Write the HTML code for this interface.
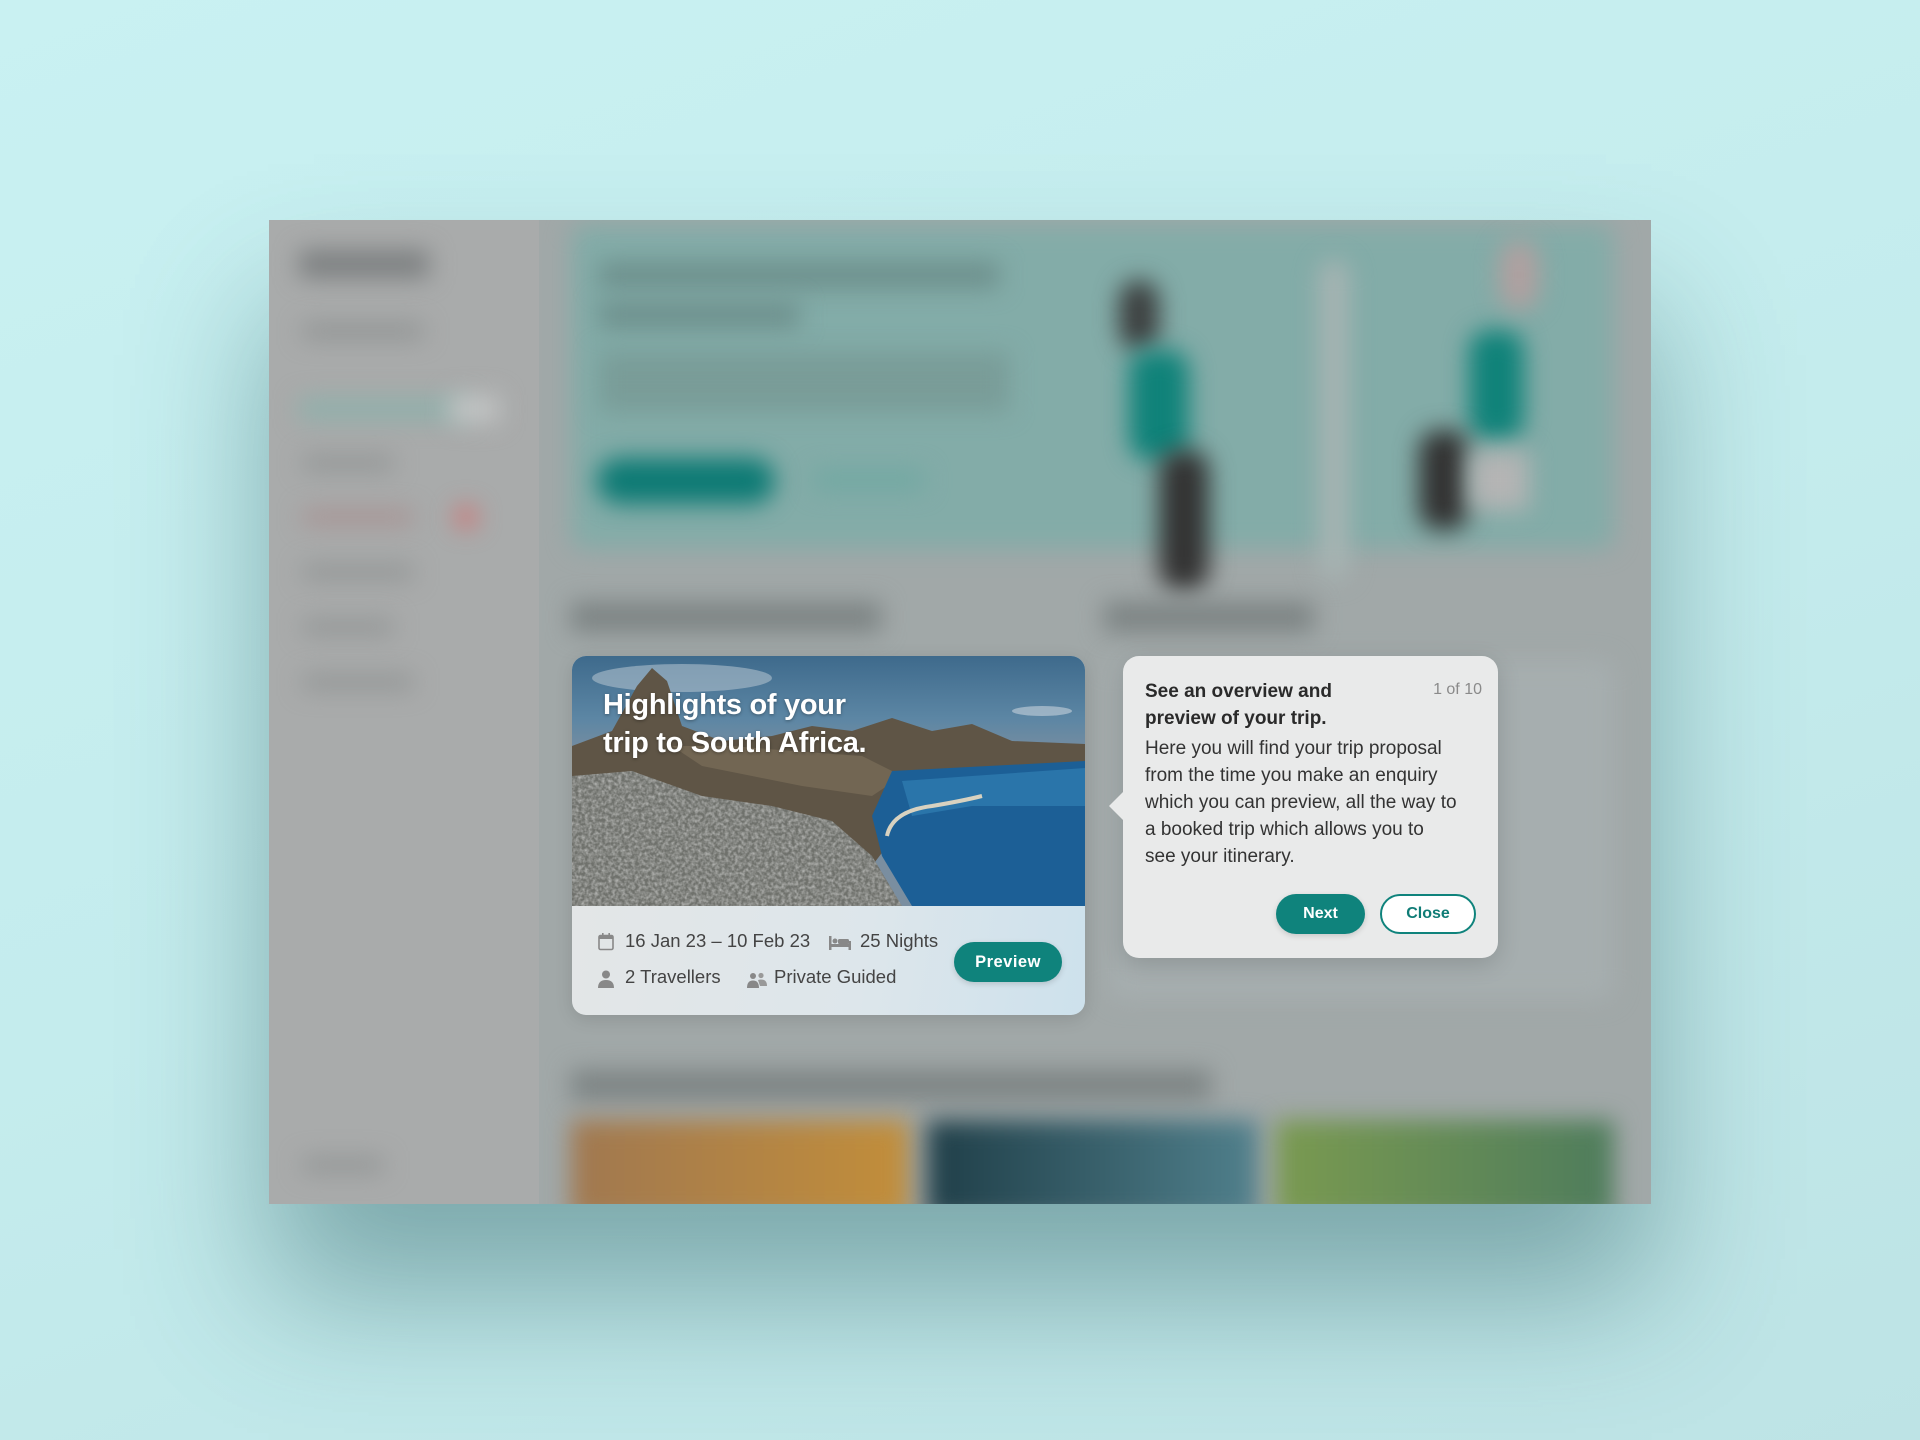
<!DOCTYPE html>
<html><head><meta charset="utf-8"><style>
*{margin:0;padding:0;box-sizing:border-box}
body{width:1920px;height:1440px;overflow:hidden;background:linear-gradient(160deg,#c9f1f2 0%,#c4eced 50%,#bde3e5 100%);font-family:"Liberation Sans",sans-serif;position:relative}
.screen{position:absolute;left:269px;top:220px;width:1382px;height:984px;background:#a1a8a8;overflow:hidden;box-shadow:0 90px 140px rgba(40,90,95,.45)}
.blur{position:absolute;filter:blur(12px)}
.side{position:absolute;left:0;top:0;width:270px;height:984px;background:#a9abab}
.hero{left:302px;top:4px;width:1043px;height:325px;background:#83aca8;border-radius:14px}
.card{position:absolute;left:303px;top:436px;width:513px;height:359px;border-radius:14px;overflow:hidden;background:linear-gradient(100deg,#e4e6e6 0%,#dde6eb 60%,#cde1ec 100%);box-shadow:0 4px 18px rgba(0,0,0,.12)}
.img{position:absolute;left:0;top:0;width:513px;height:250px;overflow:hidden;background:linear-gradient(180deg,#3e6a8c 0%,#5c86a4 25%,#7a8ea0 40%)}
.tt{position:absolute;left:854px;top:436px;width:375px;height:302px;border-radius:16px;background:#e9eaea;box-shadow:0 6px 24px rgba(0,0,0,.15)}
.tt:before{content:"";position:absolute;left:-14px;top:136px;border:14px solid transparent;border-right-color:#e9eaea;border-left:0}
.tt .t{position:absolute;left:22px;top:22px;font-size:19px;line-height:27px;color:#333;white-space:nowrap}
.tt b{font-weight:600;color:#2a2a2a}
.btn{position:absolute;height:40px;border-radius:20px;font-weight:bold;font-size:16px;text-align:center;line-height:40px}
.meta{position:absolute;font-size:18.5px;color:#444}
</style></head><body>
<div class="screen">
 <div class="side"></div>
 <div class="blur" style="left:30px;top:30px;width:130px;height:28px;background:#7c7f80;border-radius:4px"></div>
 <div class="blur" style="left:34px;top:104px;width:120px;height:14px;background:#8d9090"></div>
 <div class="blur" style="left:30px;top:178px;width:170px;height:22px;background:#8fb0ab"></div>
 <div class="blur" style="left:180px;top:175px;width:50px;height:28px;background:#c2c4c4"></div>
 <div class="blur" style="left:34px;top:236px;width:90px;height:14px;background:#909393"></div>
 <div class="blur" style="left:34px;top:290px;width:110px;height:14px;background:#a89090"></div>
 <div class="blur" style="left:186px;top:286px;width:22px;height:22px;background:#d47070;border-radius:50%"></div>
 <div class="blur" style="left:34px;top:345px;width:110px;height:14px;background:#909393"></div>
 <div class="blur" style="left:34px;top:400px;width:90px;height:14px;background:#909393"></div>
 <div class="blur" style="left:34px;top:455px;width:110px;height:14px;background:#909393"></div>
 <div class="blur" style="left:34px;top:938px;width:80px;height:14px;background:#909393"></div>
 <div class="blur hero"></div>
 <div class="blur" style="left:330px;top:42px;width:400px;height:26px;background:#6d8f8c"></div>
 <div class="blur" style="left:330px;top:82px;width:200px;height:26px;background:#6d8f8c"></div>
 <div class="blur" style="left:330px;top:132px;width:410px;height:60px;background:#799c98"></div>
 <div class="blur" style="left:328px;top:238px;width:178px;height:46px;background:#0d7a74;border-radius:23px"></div>
 <div class="blur" style="left:545px;top:250px;width:110px;height:20px;background:#71a8a2"></div>
 <div class="blur" style="left:850px;top:60px;width:40px;height:70px;background:#3c3f3f;border-radius:20px"></div>
 <div class="blur" style="left:860px;top:130px;width:60px;height:110px;background:#0f8279;border-radius:20px"></div>
 <div class="blur" style="left:890px;top:230px;width:50px;height:140px;background:#333;border-radius:20px"></div>
 <div class="blur" style="left:1200px;top:110px;width:55px;height:110px;background:#0f8279;border-radius:20px"></div>
 <div class="blur" style="left:1150px;top:210px;width:50px;height:100px;background:#333;border-radius:20px"></div>
 <div class="blur" style="left:1200px;top:230px;width:60px;height:60px;background:#b4b4b4"></div>
 <div class="blur" style="left:1230px;top:20px;width:40px;height:70px;background:#b0a0a0;border-radius:20px"></div>
 <div class="blur" style="left:1050px;top:40px;width:30px;height:320px;background:#a7b4b3;border-radius:14px"></div>
 <div class="blur" style="left:302px;top:382px;width:310px;height:30px;background:#7c8383"></div>
 <div class="blur" style="left:835px;top:382px;width:210px;height:30px;background:#7c8383"></div>
 <div class="blur" style="left:840px;top:440px;width:505px;height:340px;background:#a6aeaf;border-radius:14px"></div>
 <div class="blur" style="left:302px;top:850px;width:640px;height:30px;background:#7c8383"></div>
 <div class="blur" style="left:302px;top:900px;width:338px;height:100px;background:linear-gradient(90deg,#a07850,#c28e3a)"></div>
 <div class="blur" style="left:658px;top:900px;width:331px;height:100px;background:linear-gradient(90deg,#1f3e48,#50808c)"></div>
 <div class="blur" style="left:1007px;top:900px;width:338px;height:100px;background:linear-gradient(90deg,#7a9a50,#4e7c5c)"></div>

 <div class="card">
  <div class="img">
   <svg width="513" height="250" viewBox="0 0 513 250" style="position:absolute;left:0;top:0">
    <defs>
     <filter id="n" x="0" y="0" width="100%" height="100%"><feTurbulence type="fractalNoise" baseFrequency="0.3" numOctaves="2" seed="3"/><feColorMatrix values="0 0 0 0 1  0 0 0 0 1  0 0 0 0 1  0 0 0 -1.6 1.1"/></filter>
     <clipPath id="c"><polygon points="0,120 60,115 130,140 200,150 260,165 300,200 330,250 0,250"/></clipPath>
    </defs>
    <ellipse cx="110" cy="22" rx="90" ry="14" fill="#b8c6d2" opacity=".55"/>
    <ellipse cx="470" cy="55" rx="30" ry="5" fill="#c6d2dc" opacity=".6"/>
    <polygon points="0,250 0,90 40,75 65,30 80,12 95,25 110,70 150,85 200,80 240,70 280,75 320,62 360,75 400,68 440,85 513,88 513,115 400,125 330,170 270,250" fill="#5f5546"/>
    <polygon points="100,90 130,110 180,120 230,130 300,140 330,120 290,100 220,95 160,90" fill="#7a6e58" opacity=".7"/>
    <polygon points="320,115 513,105 513,250 340,250 310,200 300,160" fill="#1c5f96"/>
    <polygon points="330,125 400,120 513,112 513,150 400,150 340,160" fill="#2a75aa"/>
    <rect x="0" y="110" width="340" height="140" fill="#6f716c" clip-path="url(#c)"/>
    <rect x="0" y="110" width="340" height="140" filter="url(#n)" opacity=".5" clip-path="url(#c)"/>
    <path d="M315,180 Q320,155 360,150 Q390,145 410,140" stroke="#d8d2c0" stroke-width="4" fill="none"/>
   </svg>
   <div style="position:absolute;left:31px;top:30px;color:#fff;font-size:29px;line-height:38px;font-weight:600;letter-spacing:-.3px;text-shadow:0 1px 3px rgba(0,0,0,.35)">Highlights of your<br>trip to South Africa.</div>
  </div>
  <svg style="position:absolute;left:26px;top:277px" width="16" height="18" viewBox="0 0 16 18"><rect x="1" y="2.5" width="14" height="14" rx="1.5" fill="none" stroke="#888" stroke-width="1.6"/><rect x="1" y="2.5" width="14" height="3.5" fill="#888"/><rect x="4" y="0" width="1.6" height="4" fill="#888"/><rect x="10.4" y="0" width="1.6" height="4" fill="#888"/></svg>
  <div class="meta" style="left:53px;top:274px">16 Jan 23 – 10 Feb 23</div>
  <svg style="position:absolute;left:257px;top:280px" width="22" height="14" viewBox="0 0 22 14"><rect x="0" y="0" width="2.5" height="14" fill="#888"/><rect x="0" y="8" width="22" height="3" fill="#888"/><rect x="19.5" y="5" width="2.5" height="9" fill="#888"/><circle cx="6" cy="5" r="2.5" fill="#888"/><rect x="9" y="3" width="11" height="5" rx="1.5" fill="#888"/></svg>
  <div class="meta" style="left:288px;top:274px">25 Nights</div>
  <svg style="position:absolute;left:26px;top:314px" width="16" height="18" viewBox="0 0 16 18"><circle cx="8" cy="4.5" r="4" fill="#888"/><path d="M0,18 Q0,10 8,10 Q16,10 16,18Z" fill="#888"/></svg>
  <div class="meta" style="left:53px;top:310px">2 Travellers</div>
  <svg style="position:absolute;left:175px;top:316px" width="20" height="16" viewBox="0 0 20 16"><circle cx="6" cy="4" r="3" fill="#888"/><circle cx="14" cy="3.5" r="2.6" fill="#999"/><path d="M0,16 Q0,8.5 6,8.5 Q12,8.5 12,16Z" fill="#888"/><path d="M11,8 Q13,7.5 14,7.5 Q20,7.5 20,14 L13,14Z" fill="#999"/></svg>
  <div class="meta" style="left:202px;top:310px">Private Guided</div>
  <div class="btn" style="left:382px;top:286px;width:108px;background:#0f837c;color:#fff;font-size:16.5px;letter-spacing:.5px;box-shadow:0 2px 6px rgba(0,0,0,.15)">Preview</div>
 </div>

 <div class="tt">
  <div style="position:absolute;right:16px;top:25px;font-size:16px;color:#8a8a8a">1 of 10</div>
  <div class="t"><b>See an overview and<br>preview of your trip.</b><br><span style="display:block;margin-top:3px">Here you will find your trip proposal<br>from the time you make an enquiry<br>which you can preview, all the way to<br>a booked trip which allows you to<br>see your itinerary.</span></div>
  <div class="btn" style="left:153px;top:238px;width:89px;background:#0f837c;color:#fff;box-shadow:0 2px 6px rgba(0,0,0,.15)">Next</div>
  <div class="btn" style="left:257px;top:238px;width:96px;background:#fff;color:#0f7c76;border:2px solid #0f837c;line-height:36px">Close</div>
 </div>
</div>
</body></html>
